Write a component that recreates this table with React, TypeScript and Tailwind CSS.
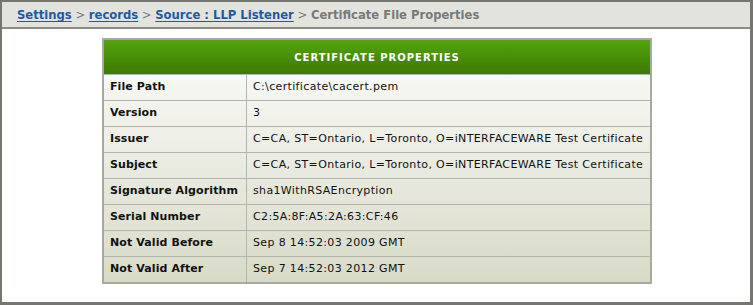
import React from "react";

const rows: [string, string][] = [
  ["File Path", "C:\\certificate\\cacert.pem"],
  ["Version", "3"],
  ["Issuer", "C=CA, ST=Ontario, L=Toronto, O=iNTERFACEWARE Test Certificate"],
  ["Subject", "C=CA, ST=Ontario, L=Toronto, O=iNTERFACEWARE Test Certificate"],
  ["Signature Algorithm", "sha1WithRSAEncryption"],
  ["Serial Number", "C2:5A:8F:A5:2A:63:CF:46"],
  ["Not Valid Before", "Sep 8 14:52:03 2009 GMT"],
  ["Not Valid After", "Sep 7 14:52:03 2012 GMT"],
];

const Crumb = ({ children }: { children: React.ReactNode }) => (
  <a href="#" className="text-[#1d5aa6] underline underline-offset-2">
    {children}
  </a>
);

const Sep = () => <span className="text-[#7a7a7a] font-normal whitespace-pre"> &gt; </span>;

const App = () => {
  return (
    <div
      className="w-[753px] h-[305px] bg-white border-t-2 border-l-2 border-r-[3px] border-b-[3px] border-[#76766f] flex flex-col"
      style={{ fontFamily: '"DejaVu Sans", Verdana, sans-serif' }}
    >
      {/* breadcrumb bar */}
      <div className="h-[27px] shrink-0 bg-[#e3e3de] border-b-2 border-[#8b8b85] flex items-center pl-[15px] pt-[3px] text-[11.6px] font-bold">
        <Crumb>Settings</Crumb>
        <Sep />
        <Crumb>records</Crumb>
        <Sep />
        <Crumb>Source : LLP Listener</Crumb>
        <Sep />
        <span className="text-[#787878]">Certificate File Properties</span>
      </div>

      {/* properties table */}
      <div className="ml-[100px] mt-[9px] w-[550px] border-2 border-[#a8aaa1]">
        <div className="h-[34px] flex items-center justify-center bg-gradient-to-b from-[#55a30f] to-[#3c7a04] text-white text-[10px] font-bold tracking-[1px]">
          CERTIFICATE PROPERTIES
        </div>
        <div className="bg-gradient-to-b from-[#f8f8f4] to-[#d8dac7]">
          {rows.map(([label, value]) => (
            <div key={label} className="flex h-[26px] border-t border-[#b3b4ab] text-[11px] text-[#111]">
              <div className="w-[143px] shrink-0 border-r border-[#b3b4ab] flex items-center pl-[6px] font-bold tracking-[0.1px]">
                {label}
              </div>
              <div className="flex items-center pl-[6px] whitespace-nowrap tracking-[0.35px]">{value}</div>
            </div>
          ))}
        </div>
      </div>
    </div>
  );
};

export default App;
